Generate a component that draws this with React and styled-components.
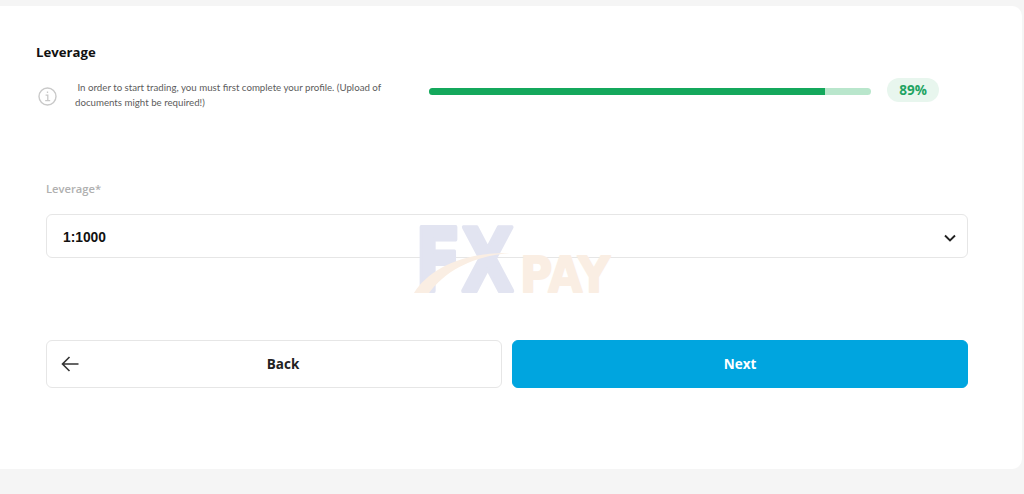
import React from "react";
import styled, { createGlobalStyle } from "styled-components";

const GlobalStyle = createGlobalStyle`
  html, body {
    margin: 0;
    padding: 0;
    height: 100%;
    background: #f5f5f5;
    font-family: "Open Sans", "Liberation Sans", sans-serif;
  }
`;

const Page = styled.main`
  width: 1024px;
  height: 494px;
  padding: 6px 2px 25px 0;
  box-sizing: border-box;
  overflow: hidden;
`;

const Card = styled.section`
  position: relative;
  height: 100%;
  background: #fff;
  border-radius: 0 10px 10px 0;
  padding: 37px 54px 0 36px;
  box-sizing: border-box;
`;

const Heading = styled.h2`
  margin: 0;
  font-size: 13.2px;
  line-height: 18px;
  font-weight: 700;
  color: #111;
`;

const Status = styled.div`
  display: flex;
  align-items: center;
  margin-top: 14px;
  height: 32px;
`;

const InfoIcon = styled.svg`
  flex: none;
  width: 19px;
  height: 19px;
  margin: 11px 0 0 2px;
  color: #c9c9c9;
`;

const Notice = styled.p`
  flex: none;
  width: 320px;
  margin: 8px 0 0 18px;
  font-family: Lato, "Open Sans", sans-serif;
  font-size: 9.7px;
  line-height: 15px;
  font-weight: 400;
  color: #5c5c5c;
`;

const Track = styled.div`
  flex: none;
  width: 442px;
  height: 7px;
  margin-left: 34px;
  border-radius: 4px;
  background: #b9e6cc;
  overflow: hidden;
`;

const Fill = styled.div`
  height: 100%;
  background: #14a85c;
`;

const Badge = styled.span`
  flex: none;
  width: 52px;
  height: 24px;
  margin: -2px 0 0 16px;
  border-radius: 12px;
  background: #e8f6ee;
  color: #1fa463;
  font-size: 13.5px;
  font-weight: 700;
  line-height: 24px;
  text-align: center;
`;

const Form = styled.form`
  width: 922px;
  margin: 74px 0 0 10px;
`;

const Label = styled.label`
  display: block;
  font-size: 11.2px;
  line-height: 16px;
  font-weight: 600;
  color: #b0b0b0;
`;

const Select = styled.div`
  display: flex;
  align-items: center;
  justify-content: space-between;
  height: 44px;
  margin-top: 17px;
  padding: 2px 9px 0 16px;
  border: 1px solid #e6e6e6;
  border-radius: 6px;
  box-sizing: border-box;
  font-family: "Liberation Sans", Arial, sans-serif;
  font-size: 13.8px;
  font-weight: 700;
  color: #111;
`;

const Chevron = styled.svg`
  flex: none;
  margin-top: 2px;
`;

const Actions = styled.div`
  display: grid;
  grid-template-columns: 456px 456px;
  gap: 10px;
  margin-top: 82px;
`;

const Button = styled.button`
  display: flex;
  align-items: center;
  height: 48px;
  padding: 0 14px;
  box-sizing: border-box;
  border: 1px solid ${(p) => (p.$primary ? "#00a5df" : "#e6e6e6")};
  border-radius: 6px;
  background: ${(p) => (p.$primary ? "#00a5df" : "#fff")};
  color: ${(p) => (p.$primary ? "#fff" : "#222")};
  font-family: inherit;
  font-size: 13.5px;
  font-weight: 700;
`;

const ButtonLabel = styled.span`
  flex: 1;
  text-align: center;
`;

const Watermark = styled.svg`
  position: absolute;
  left: 414px;
  top: 220px;
  width: 197px;
  height: 67px;
  overflow: visible;
  pointer-events: none;
`;

function App() {
  return (
    <>
      <GlobalStyle />
      <Page>
        <Card>
          <Heading>Leverage</Heading>
          <Status>
            <InfoIcon viewBox="0 0 19 19" fill="none" stroke="currentColor">
              <circle cx="9.5" cy="9.5" r="8.5" strokeWidth="1.4" />
              <path d="M9.5 4.6v1.4M7.6 8.2h2.2v5.2M7.2 13.6h5" strokeWidth="1.3" />
            </InfoIcon>
            <Notice>
              {"\u00a0In order to start trading, you must first complete your profile. (Upload of documents might be required!)"}
            </Notice>
            <Track>
              <Fill style={{ width: "89.6%" }} />
            </Track>
            <Badge>89%</Badge>
          </Status>
          <Form>
            <Label>Leverage*</Label>
            <Select>
              1:1000
              <Chevron width="16" height="10" viewBox="0 0 16 10" fill="none">
                <path d="M3 2.5l5 5 5-5" stroke="#222" strokeWidth="1.9" />
              </Chevron>
            </Select>
            <Actions>
              <Button type="button">
                <svg width="18" height="16" viewBox="0 0 18 16" fill="none">
                  <path d="M17.5 8H1.5M8.5 1L1.5 8l7 7" stroke="#333" strokeWidth="1.6" />
                </svg>
                <ButtonLabel>Back</ButtonLabel>
              </Button>
              <Button type="button" $primary>
                <ButtonLabel>Next</ButtonLabel>
              </Button>
            </Actions>
          </Form>
          <Watermark viewBox="0 0 197 67">
            <text
              x="1"
              y="65"
              textLength="99"
              lengthAdjust="spacingAndGlyphs"
              fontFamily="DejaVu Sans"
              fontWeight="700"
              fontSize="88"
              fill="#e2e4f1"
              stroke="#e2e4f1"
              strokeWidth="4"
              strokeLinejoin="round"
            >
              FX
            </text>
            <text
              x="106"
              y="66"
              textLength="90"
              lengthAdjust="spacingAndGlyphs"
              fontFamily="DejaVu Sans"
              fontWeight="700"
              fontSize="50"
              fill="#faeee3"
              stroke="#faeee3"
              strokeWidth="2"
              strokeLinejoin="round"
            >
              PAY
            </text>
            <path d="M0 67C14 44 48 26 96 27C60 30 32 44 15 67Z" fill="#faeee3" />
          </Watermark>
        </Card>
      </Page>
    </>
  );
}

export default App;
